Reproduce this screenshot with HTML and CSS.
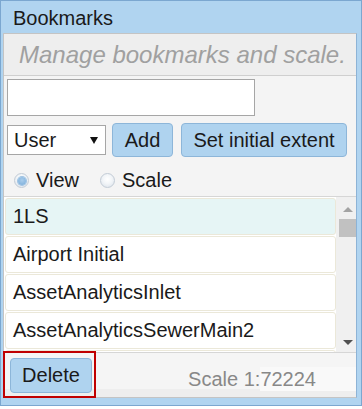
FILE: index.html
```html
<!DOCTYPE html>
<html>
<head>
<meta charset="utf-8">
<link rel="stylesheet" href="styles.css">
</head>
<body>
<div class="window">
  <div class="title">Bookmarks</div>
  <div class="panel">
    <div class="header">Manage bookmarks and scale.</div>
    <div class="body">
      <input class="name-input" type="text">
      <div class="controls">
        <div class="select"><span>User</span><span class="caret"></span></div>
        <button class="btn btn-add">Add</button>
        <button class="btn btn-extent">Set initial extent</button>
      </div>
      <div class="radios">
        <span class="radio"><span class="dot checked"></span>View</span>
        <span class="radio"><span class="dot"></span>Scale</span>
      </div>
    </div>
    <div class="list">
      <div class="items">
        <div class="item selected">1LS</div>
        <div class="item">Airport Initial</div>
        <div class="item">AssetAnalyticsInlet</div>
        <div class="item">AssetAnalyticsSewerMain2</div>
        <div class="item">AssetAnalyticsValve</div>
      </div>
      <div class="scrollbar">
        <span class="arrow up"></span>
        <span class="thumb"></span>
        <span class="arrow down"></span>
      </div>
    </div>
    <div class="footer">
      <div class="delete-wrap"><button class="btn btn-delete">Delete</button></div>
      <div class="scale"><span>Scale 1:</span><span class="scale-value">72224</span></div>
    </div>
  </div>
</div>
</body>
</html>
```
FILE: styles.css
```css
* { box-sizing: border-box; }
html, body { margin: 0; padding: 0; background: #ffffff; }
body { font-family: "Liberation Sans", Arial, sans-serif; color: #1a1a1a; }

.window {
  width: 362px;
  height: 406px;
  border: 1px solid #7ba7d0;
  background: #b0d4f0;
  padding: 0 4px 7px 2px;
  display: flex;
  flex-direction: column;
}

.title {
  height: 32px;
  padding: 3px 0 0 10px;
  font-size: 20px;
  line-height: 29px;
  color: #1a1a1a;
}

.panel {
  width: 354px;
  height: 365px;
  border: 1px solid #c4c4c4;
  border-right-color: #8db3d6;
  background: #f4f4f4;
  display: flex;
  flex-direction: column;
}

.header {
  height: 42px;
  border-bottom: 1px solid #cfcfcf;
  background: #eeeeee;
  color: #a0a0a0;
  font-style: italic;
  font-size: 24px;
  padding-left: 15px;
  display: flex;
  align-items: center;
  white-space: nowrap;
}

.body {
  height: 120px;
  padding: 3px 0 0 3px;
  display: flex;
  flex-direction: column;
}

.name-input {
  width: 248px;
  height: 37px;
  margin: 0;
  border: 1px solid #a6a6a6;
  background: #ffffff;
  font-family: "Liberation Sans", Arial, sans-serif;
  font-size: 20px;
  outline: none;
}

.controls {
  margin-top: 7px;
  height: 34px;
  display: flex;
  align-items: center;
}

.select {
  width: 99px;
  height: 30px;
  border: 1px solid #a6a6a6;
  background: #ffffff;
  font-size: 20px;
  padding-left: 6px;
  display: flex;
  align-items: center;
}

.caret {
  margin-left: auto;
  margin-right: 7px;
  width: 0;
  height: 0;
  border-left: 4px solid transparent;
  border-right: 4px solid transparent;
  border-top: 7px solid #111111;
}

.btn {
  height: 34px;
  margin: 0;
  padding: 0;
  border: 1px solid #8db6d9;
  border-radius: 4px;
  background: #afd3ef;
  font-family: "Liberation Sans", Arial, sans-serif;
  font-size: 20px;
  color: #1a1a1a;
  white-space: nowrap;
}

.btn-add { width: 61px; margin-left: 6px; }
.btn-extent { width: 166px; margin-left: 8px; }

.radios {
  height: 39px;
  padding: 8px 0 0 7px;
  display: flex;
  align-items: center;
  font-size: 20px;
}

.radio {
  display: flex;
  align-items: center;
}

.radio + .radio { margin-left: 21px; }

.dot {
  width: 15px;
  height: 15px;
  margin-right: 7px;
  border-radius: 50%;
  border: 1px solid #c3ccd6;
  background: radial-gradient(circle at 50% 40%, #ffffff 0, #f2f5f8 45%, #d8e0e8 100%);
  display: flex;
  align-items: center;
  justify-content: center;
}

.dot.checked::after {
  content: "";
  width: 8px;
  height: 8px;
  border-radius: 50%;
  background: radial-gradient(circle at 50% 40%, #a9cdec 0, #79acd8 100%);
  box-shadow: 0 0 0 1px #9fc3e3;
}

.list {
  height: 157px;
  border-top: 1px solid #d6d6d6;
  border-bottom: 1px solid #d6d6d6;
  display: flex;
}

.items {
  width: 332px;
  padding: 1px 0 0 1px;
  overflow: hidden;
  background: #ffffff;
}

.item {
  width: 331px;
  height: 37px;
  margin-bottom: 1px;
  border: 1px solid #ebe8d9;
  border-radius: 3px;
  background: #ffffff;
  font-size: 20px;
  padding-left: 7px;
  display: flex;
  align-items: center;
  white-space: nowrap;
}

.item.selected { background: #e6f5f5; }

.scrollbar {
  width: 20px;
  background: #f0f0f0;
  display: flex;
  flex-direction: column;
  padding-left: 3px;
}

.arrow {
  align-self: center;
  width: 0;
  height: 0;
  border-left: 5px solid transparent;
  border-right: 5px solid transparent;
}

.arrow.up {
  margin-top: 10px;
  border-bottom: 5px solid #a3a3a3;
}

.arrow.down {
  margin-top: auto;
  margin-bottom: 7px;
  border-top: 5px solid #505050;
}

.thumb {
  margin-top: 7px;
  height: 18px;
  width: 17px;
  background: #c1c1c1;
}

.footer {
  height: 44px;
  display: flex;
  align-items: flex-start;
  background: linear-gradient(#f5f5f5 0, #f5f5f5 36px, #eeeeee 36px);
}

.delete-wrap {
  width: 90px;
  height: 43px;
  margin-left: 1px;
  outline: 2px solid #c00000;
  padding: 5px 0 0 5px;
}

.btn-delete { width: 82px; height: 35px; }

.scale {
  margin-left: 94px;
  margin-top: 14px;
  font-size: 20px;
  line-height: 24px;
  color: #888888;
  white-space: nowrap;
  display: flex;
}

.scale-value {
  padding-right: 40px;
  background: #f9f9f9;
}
```
